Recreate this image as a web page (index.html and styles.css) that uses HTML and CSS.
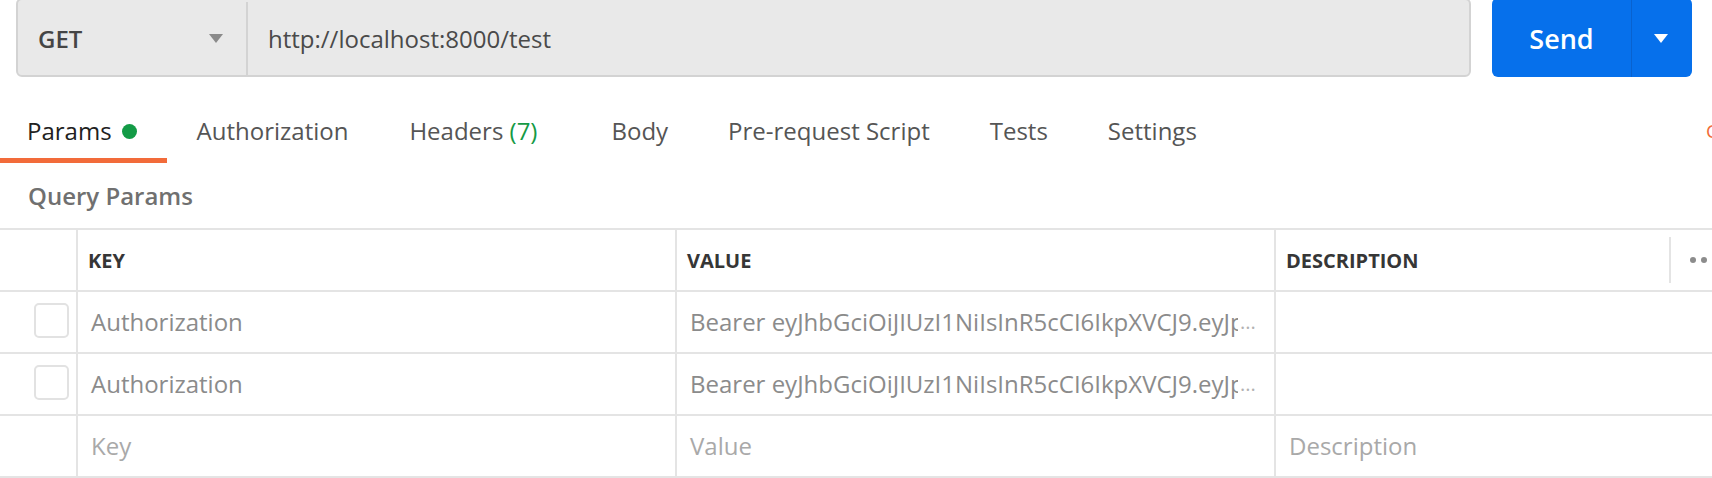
FILE: index.html
```html
<!DOCTYPE html>
<html lang="en">
<head>
<meta charset="utf-8">
<title>Request</title>
<link rel="stylesheet" href="styles.css">
</head>
<body>
<div class="topbar">
  <div class="urlbar">
    <div class="method">
      <span class="method-name">GET</span>
      <span class="caret"></span>
    </div>
    <div class="url">http://localhost:8000/test</div>
  </div>
  <div class="send">
    <div class="send-main">Send</div>
    <div class="send-drop"><span class="caret-white"></span></div>
  </div>
</div>

<div class="tabs">
  <div class="tab active">Params<span class="dot"></span></div>
  <div class="tab tab-auth">Authorization</div>
  <div class="tab tab-headers">Headers <span class="count">(7)</span></div>
  <div class="tab">Body</div>
  <div class="tab">Pre-request Script</div>
  <div class="tab">Tests</div>
  <div class="tab">Settings</div>
  <div class="links">Cookies</div>
</div>

<div class="section-title">Query Params</div>

<div class="table">
  <div class="row head">
    <div class="cell check"></div>
    <div class="cell">KEY</div>
    <div class="cell">VALUE</div>
    <div class="cell">DESCRIPTION
      <div class="colmenu"><span class="d"></span><span class="d"></span><span class="d"></span></div>
    </div>
  </div>
  <div class="row">
    <div class="cell check"><span class="box"></span></div>
    <div class="cell text">Authorization</div>
    <div class="cell text"><span class="clip">Bearer eyJhbGciOiJIUzI1NiIsInR5cCI6IkpXVCJ9.eyJp</span><span class="more">...</span></div>
    <div class="cell text"></div>
  </div>
  <div class="row">
    <div class="cell check"><span class="box"></span></div>
    <div class="cell text">Authorization</div>
    <div class="cell text"><span class="clip">Bearer eyJhbGciOiJIUzI1NiIsInR5cCI6IkpXVCJ9.eyJp</span><span class="more">...</span></div>
    <div class="cell text"></div>
  </div>
  <div class="row">
    <div class="cell check"></div>
    <div class="cell text ph">Key</div>
    <div class="cell text ph">Value</div>
    <div class="cell text ph">Description</div>
  </div>
</div>
</body>
</html>
```

FILE: styles.css
```css
html, body {
  margin: 0;
  padding: 0;
  background: #ffffff;
  overflow: hidden;
}

body {
  width: 1712px;
  height: 478px;
  font-family: "Open Sans", "Noto Sans", sans-serif;
  color: #505050;
}

/* ---------- top bar ---------- */
.topbar {
  display: flex;
  gap: 21px;
  height: 79px;
  margin-top: -2px;
  padding: 0 20px 0 16px;
}

.urlbar {
  flex: 1;
  display: flex;
  box-sizing: border-box;
  background: #e9e9e9;
  border: 2px solid #d3d3d3;
  border-radius: 6px;
  padding-top: 2px;
}

.method {
  box-sizing: border-box;
  width: 230px;
  display: flex;
  align-items: center;
  justify-content: space-between;
  padding: 0 23px 0 20px;
  border-right: 2px solid #d3d3d3;
}

.method-name {
  font-size: 24px;
  font-weight: 600;
  line-height: 32px;
  color: #454545;
}

.caret {
  width: 0;
  height: 0;
  border-left: 7.5px solid transparent;
  border-right: 7.5px solid transparent;
  border-top: 9px solid #8a8a8a;
}

.url {
  display: flex;
  align-items: center;
  padding-left: 20px;
  font-size: 24px;
  line-height: 32px;
  color: #4a4a4a;
}

.send {
  width: 200px;
  display: flex;
  background: #0670eb;
  border-radius: 6px;
  color: #ffffff;
}

.send-main {
  width: 139px;
  display: flex;
  align-items: center;
  justify-content: center;
  font-size: 27px;
  font-weight: 600;
  line-height: 36px;
  border-right: 1px solid #0862cf;
  padding-top: 2px;
}

.send-drop {
  flex: 1;
  display: flex;
  align-items: center;
  justify-content: center;
  padding-top: 2px;
}

.caret-white {
  width: 0;
  height: 0;
  border-left: 7.5px solid transparent;
  border-right: 7.5px solid transparent;
  border-top: 9px solid #ffffff;
  margin-left: -3px;
}

/* ---------- tabs ---------- */
.tabs {
  display: flex;
  margin-top: 38px;
  white-space: nowrap;
}

.tab {
  font-size: 24px;
  line-height: 32px;
  padding: 0 30px 11px;
  border-bottom: 5px solid transparent;
  color: #555555;
}

.tab.active {
  color: #212121;
  padding-left: 27px;
  padding-right: 30px;
  border-bottom-color: #f26b3a;
}

.tab-auth {
  padding-right: 31px;
}

.tab-headers {
  padding-right: 44px;
}

.dot {
  display: inline-block;
  width: 15px;
  height: 15px;
  border-radius: 50%;
  background: #139b46;
  margin-left: 10px;
  vertical-align: 1px;
}

.count {
  color: #159a45;
}

.links {
  flex-shrink: 0;
  width: 100px;
  margin-left: auto;
  margin-right: -94px;
  align-self: flex-start;
  font-size: 19px;
  line-height: 32px;
  color: #f26b3a;
}

/* ---------- query params ---------- */
.section-title {
  margin: 17px 0 16px;
  padding-left: 28px;
  font-size: 24px;
  font-weight: 600;
  line-height: 32px;
  color: #707070;
}

.table {
  border-top: 2px solid #e4e4e4;
}

.row {
  display: grid;
  grid-template-columns: 76px 599px 599px 1fr;
  height: 62px;
  box-sizing: border-box;
  border-bottom: 2px solid #e4e4e4;
}

.cell {
  display: flex;
  align-items: center;
  min-width: 0;
  overflow: hidden;
  border-left: 2px solid #e4e4e4;
  padding-left: 13px;
  white-space: nowrap;
}

.cell.check {
  border-left: none;
  padding: 0 7px 0 0;
  justify-content: flex-end;
}

.head .cell {
  padding-left: 10px;
  font-size: 20px;
  font-weight: 700;
  color: #363636;
}

.head .cell.check {
  padding: 0;
}

.colmenu {
  margin-left: auto;
  flex-shrink: 0;
  box-sizing: border-box;
  width: 43px;
  height: 46px;
  border-left: 2px solid #e4e4e4;
  padding-left: 19px;
  display: flex;
  align-items: center;
  gap: 5px;
}

.colmenu .d {
  flex-shrink: 0;
  width: 6px;
  height: 6px;
  border-radius: 50%;
  background: #8c8c8c;
}

.text {
  font-size: 24px;
  line-height: 32px;
  color: #8b8b8b;
}

.text.ph {
  color: #a9a9a9;
}

.box {
  width: 35px;
  height: 35px;
  box-sizing: border-box;
  border: 2px solid #e2e2e2;
  border-radius: 5px;
  background: #ffffff;
  margin-top: -3px;
}

.clip {
  display: block;
  width: 548px;
  flex-shrink: 0;
  overflow: hidden;
}

.more {
  margin-left: 2px;
  font-size: 20px;
  color: #b2b2b2;
}
```
